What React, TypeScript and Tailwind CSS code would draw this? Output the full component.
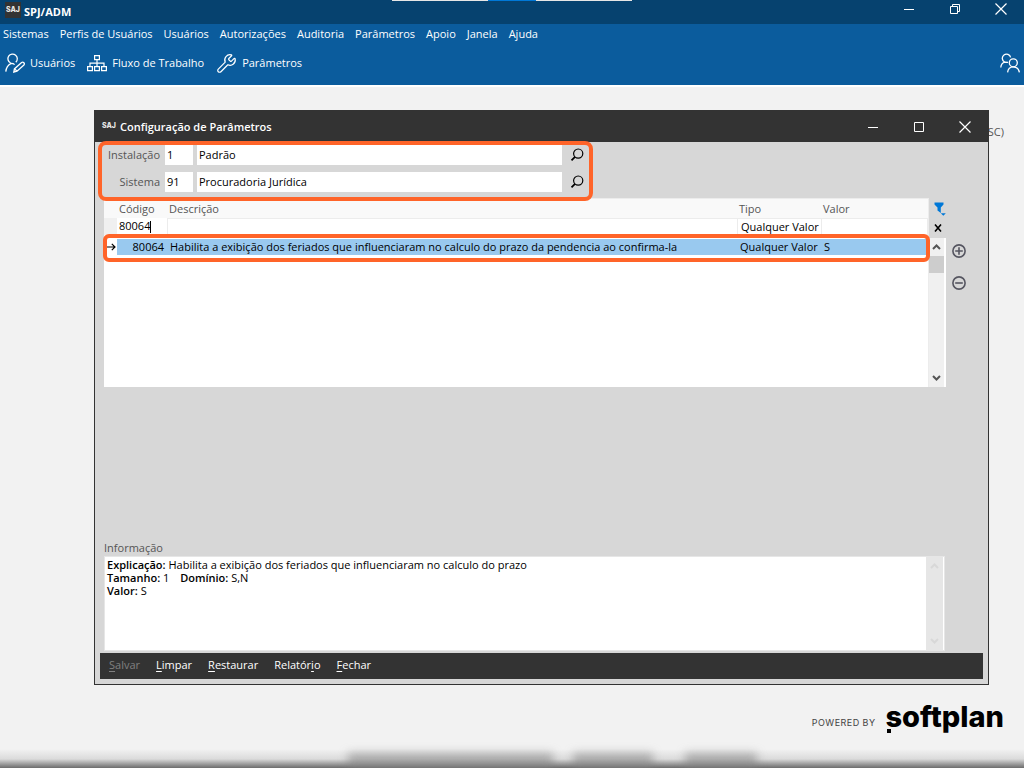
import { Wrench } from "lucide-react";

const MENU = [
  "Sistemas",
  "Perfis de Usuários",
  "Usuários",
  "Autorizações",
  "Auditoria",
  "Parâmetros",
  "Apoio",
  "Janela",
  "Ajuda",
];

const ACTIONS = [
  { before: "", key: "S", after: "alvar", disabled: true },
  { before: "", key: "L", after: "impar", disabled: false },
  { before: "", key: "R", after: "estaurar", disabled: false },
  { before: "Relatór", key: "i", after: "o", disabled: false },
  { before: "", key: "F", after: "echar", disabled: false },
];

const FIELDS = [
  { id: "instalacao", label: "Instalação", code: "1", name: "Padrão" },
  { id: "sistema", label: "Sistema", code: "91", name: "Procuradoria Jurídica" },
];

function UserEditIcon() {
  return (
    <svg width="20" height="20" viewBox="0 0 20 20" fill="none" stroke="currentColor" strokeWidth="1.3">
      <path d="M5.6 10A4.7 4.7 0 1 1 10.8 9.2M0.8 18.6C1.2 14.5 3 12 6.2 10.4C7.6 10.4 8.8 10.8 9.6 11.6" />
      <path d="M8.8 19L9.4 15.9L16.6 9.6C18.2 8.4 20.2 10.4 18.9 12L12 18.2L8.8 19ZM9.6 15.9L12 18.1" />
    </svg>
  );
}

function FlowIcon() {
  return (
    <svg width="20" height="18" viewBox="0 0 20 18" fill="none" stroke="currentColor" strokeWidth="1.2">
      <path d="M7.6 1.6h4.8v4H7.6zM0.6 12.6h4.8v4H0.6zM7.6 12.6h4.8v4H7.6zM14.6 12.6h4.8v4h-4.8z" />
      <path d="M10 5.6v7M3 12.6V9.1h14v3.5" />
    </svg>
  );
}

function UsersIcon() {
  return (
    <svg width="20" height="20" viewBox="0 0 20 20" fill="none" stroke="currentColor" strokeWidth="1.3">
      <path d="M4.5 9A4.2 4.2 0 1 1 10.6 4.4M0.8 14.5C1 11.5 2.3 9.8 5 9.2L8 9.4" />
      <circle cx="13.3" cy="9.8" r="4" />
      <path d="M7.6 19.4C8 15.8 10 13.9 13.3 13.9S18.8 15.8 19.4 19.4" />
    </svg>
  );
}

function SearchIcon() {
  return (
    <svg width="14" height="14" viewBox="0 0 14 14" fill="none" stroke="currentColor">
      <circle cx="8.2" cy="5.6" r="4.6" strokeWidth="1.2" />
      <path d="M5 8.9L1.5 12.4" strokeWidth="1.8" />
    </svg>
  );
}

function FilterIcon() {
  return (
    <svg width="12" height="14" viewBox="0 0 12 14" fill="#0078d7">
      <path d="M0.5 0.5h9v2L6.8 5.5v5.5L3.5 8.5v-3L0.5 2.5zM6.8 11.2h5L9.3 13.7z" />
    </svg>
  );
}

function Chevron({ up = false }: { up?: boolean }) {
  return (
    <svg width="9" height="6" viewBox="0 0 9 6" fill="none" stroke="currentColor" strokeWidth="2">
      <path d={up ? "M1 5L4.5 1.5L8 5" : "M1 1L4.5 4.5L8 1"} />
    </svg>
  );
}

function SajMark({ boxed = false }: { boxed?: boolean }) {
  return (
    <span
      className={`flex h-4 w-4 shrink-0 items-center justify-center bg-[#333333] font-['Inter'] text-[7px] font-extrabold text-neutral-200 ${boxed ? "self-start mt-0.5" : ""}`}
    >
      SAJ
    </span>
  );
}

function WindowButtons({ restore = false }: { restore?: boolean }) {
  return (
    <div className="ml-auto flex h-full text-white">
      <button aria-label="Minimizar" className="flex w-[46px] items-center justify-center">
        <svg width="10" height="10" viewBox="0 0 10 10" stroke="currentColor">
          <path d="M0 5.5h10" />
        </svg>
      </button>
      <button aria-label={restore ? "Restaurar janela" : "Maximizar"} className="flex w-[46px] items-center justify-center">
        <svg width="10" height="10" viewBox="0 0 10 10" fill="none" stroke="currentColor">
          {restore ? <path d="M0.5 2.5h7v7h-7zM2.5 2.5v-2h7v7h-2" /> : <path d="M0.5 0.5h9v9h-9z" />}
        </svg>
      </button>
      <button aria-label="Fechar janela" className="flex w-[46px] items-center justify-center">
        <svg width="12" height="12" viewBox="0 0 12 12" stroke="currentColor" strokeWidth="1.2">
          <path d="M0.5 0.5l11 11M11.5 0.5l-11 11" />
        </svg>
      </button>
    </div>
  );
}

function ParamTable() {
  return (
    <div className="relative min-w-0 flex-1 border-r border-t border-[#ececec] bg-white">
      <table className="w-full table-fixed border-separate border-spacing-0 text-left">
        <colgroup>
          <col className="w-[13px]" />
          <col className="w-[50px]" />
          <col />
          <col className="w-[84px]" />
          <col className="w-[107px]" />
        </colgroup>
        <thead>
          <tr className="h-[19px] bg-[#f9f9f9] text-[#555555]">
            <th aria-label="Linha atual" className="p-0" />
            <th className="p-0 pl-0.5 pt-0.5 font-normal">Código</th>
            <th className="p-0 pl-0.5 pt-0.5 font-normal">Descrição</th>
            <th className="p-0 pl-0.5 pt-0.5 font-normal">Tipo</th>
            <th className="p-0 pl-0.5 pt-0.5 font-normal">Valor</th>
          </tr>
        </thead>
        <tbody>
          <tr className="h-[17px]">
            <td className="bg-[#f0f0f0] p-0" />
            <td className="p-0 pl-0.5">
              <div className="flex">
                <input aria-label="Filtrar código" defaultValue="80064" className="h-4 w-[31px] outline-none" />
                <span className="h-3 w-px self-center bg-black" />
              </div>
            </td>
            <td className="border-l border-t border-[#ececec] p-0">
              <input aria-label="Filtrar descrição" className="block h-4 w-full px-0.5 outline-none" />
            </td>
            <td className="border-l border-t border-[#ececec] p-0">
              <input aria-label="Filtrar tipo" defaultValue="Qualquer Valor" className="block h-4 w-full pl-[3px] outline-none" />
            </td>
            <td className="border-l border-r border-t border-[#ececec] p-0">
              <input aria-label="Filtrar valor" className="block h-4 w-full px-0.5 outline-none" />
            </td>
          </tr>
          <tr className="h-6 whitespace-nowrap leading-4">
            <td className="p-0">
              <svg className="ml-[3px]" width="9" height="8" viewBox="0 0 9 8" fill="none" stroke="#000" strokeWidth="1.2">
                <path d="M0 4h8M4.8 0.8L8 4L4.8 7.2" />
              </svg>
            </td>
            <td className="border-y-4 border-white bg-[#99c9ef] p-0 pr-[3px] text-right">80064</td>
            <td className="border-y-4 border-white bg-[#99c9ef] p-0 pl-[3px]">
              Habilita a exibição dos feriados que influenciaram no calculo do prazo da pendencia ao confirma-la
            </td>
            <td className="border-y-4 border-white bg-[#99c9ef] p-0 pl-[3px]">Qualquer Valor</td>
            <td className="border-y-4 border-white bg-[#99c9ef] p-0 pl-[3px]">S</td>
          </tr>
        </tbody>
      </table>
      <div className="pointer-events-none absolute -left-px -right-0.5 top-[35px] h-7 rounded-md border-4 border-[#ff6429]" />
    </div>
  );
}

function ParamDialog() {
  return (
    <section
      aria-label="Configuração de Parâmetros"
      className="relative ml-[94px] mr-[35px] flex min-h-[575px] flex-col border border-[#333333] bg-[#d7d7d7]"
    >
      <div className="flex h-[31px] items-center bg-[#333333] pl-1.5 text-white">
        <SajMark />
        <h1 className="ml-[3px] pt-0.5 font-semibold">Configuração de Parâmetros</h1>
        <WindowButtons />
      </div>

      <div className="relative z-10 -mt-px ml-[3px] flex h-[60px] w-[495px] flex-col gap-[7px] rounded-lg border-4 border-[#ff6429]">
        {FIELDS.map(({ id, label, code, name }) => (
          <div key={id} className="flex h-5 items-center">
            <label htmlFor={id} className="w-[59px] pr-px text-right text-[#555555]">
              {label}
            </label>
            <input id={id} defaultValue={code} className="ml-1 h-5 w-7 bg-white px-0.5 pb-0.5 outline-none" />
            <input
              aria-label={`Nome: ${label}`}
              defaultValue={name}
              className="ml-1 h-5 min-w-0 flex-1 bg-white px-0.5 pb-0.5 outline-none"
            />
            <button aria-label={`Pesquisar ${label}`} className="flex w-[27px] items-center justify-end pr-[5px]">
              <SearchIcon />
            </button>
          </div>
        ))}
      </div>

      <div className="-mt-[3px] flex h-[189px] pl-[9px]">
        <ParamTable />
        <div className="flex w-[17px] flex-col">
          <div className="flex h-10 flex-col items-center gap-2 pt-1">
            <button aria-label="Filtrar" className="ml-1">
              <FilterIcon />
            </button>
            <button aria-label="Limpar filtro">
              <svg width="8" height="8" viewBox="0 0 8 8" stroke="#000" strokeWidth="1.6">
                <path d="M1 0.5l6 7M7 0.5l-6 7" />
              </svg>
            </button>
          </div>
          <div className="flex flex-1 flex-col items-center border-r-2 border-white bg-[#f0f0f0] text-[#555555]">
            <button aria-label="Rolar para cima" className="flex h-[18px] items-center">
              <Chevron up />
            </button>
            <div className="h-[17px] w-[15px] bg-[#cdcdcd]" />
            <button aria-label="Rolar para baixo" className="mt-auto flex h-[18px] items-center">
              <Chevron />
            </button>
          </div>
        </div>
        <div className="flex w-[42px] flex-col gap-[18px] pl-1.5 pt-[46px] text-[#555560]">
          <button aria-label="Adicionar" className="h-3.5 w-3.5">
            <svg width="14" height="14" viewBox="0 0 14 14" fill="none" stroke="currentColor" strokeWidth="1.6">
              <circle cx="7" cy="7" r="6.1" />
              <path d="M3.2 7h7.6M7 3.2v7.6" />
            </svg>
          </button>
          <button aria-label="Remover" className="h-3.5 w-3.5">
            <svg width="14" height="14" viewBox="0 0 14 14" fill="none" stroke="currentColor" strokeWidth="1.6">
              <circle cx="7" cy="7" r="6.1" />
              <path d="M3.2 7h7.6" />
            </svg>
          </button>
        </div>
      </div>

      <h2 className="mt-auto pl-[9px] leading-4 text-[#555555]">Informação</h2>
      <div className="ml-[9px] mr-[43px] flex min-h-[95px] border border-[#e6e6e6] bg-white">
        <div className="flex-1 pl-0.5 pt-px leading-[13px]">
          <p>
            <b className="font-semibold">Explicação:</b> Habilita a exibição dos feriados que influenciaram no calculo do
            prazo
          </p>
          <p>
            <b className="font-semibold">Tamanho:</b> 1 <b className="ml-2 font-semibold">Domínio:</b> S,N
          </p>
          <p>
            <b className="font-semibold">Valor:</b> S
          </p>
        </div>
        <div className="mr-px flex w-[17px] flex-col items-center justify-between bg-[#e6e6e6] py-1.5 text-[#d8d8d8]">
          <Chevron up />
          <Chevron />
        </div>
      </div>

      <div className="mx-[5px] mb-[5px] mt-0.5 flex h-[26px] items-center gap-4 bg-[#333333] pb-0.5 pl-[9px] text-white">
        {ACTIONS.map(({ before, key, after, disabled }) => (
          <button key={key} disabled={disabled} className="disabled:text-[#808080]">
            {before}
            <span className="underline underline-offset-2">{key}</span>
            {after}
          </button>
        ))}
      </div>
    </section>
  );
}

export default function App() {
  return (
    <div className="flex min-h-screen flex-col bg-[#f2f2f2] font-['Open_Sans',sans-serif] text-[11px] text-black">
      <header className="relative border-b-2 border-white bg-[#0b5c9d] pb-[3px] text-white">
        <div className="flex h-6 items-center bg-[#06426f] pl-[5px]">
          <SajMark boxed />
          <span className="ml-[3px] font-bold">SPJ/ADM</span>
          <div className="-mt-1.5 ml-auto h-6">
            <WindowButtons restore />
          </div>
        </div>
        <div className="absolute left-1/2 top-0 flex h-px w-60 -translate-x-1/2">
          <div className="flex-1 bg-[#e6e6e6]" />
          <div className="w-12 bg-[#0078d7]" />
          <div className="flex-1 bg-[#e6e6e6]" />
        </div>
        <nav className="flex h-5 items-center gap-[11px] pl-[3px]">
          {MENU.map((item) => (
            <button key={item}>{item}</button>
          ))}
        </nav>
        <div className="flex h-[38px] items-center gap-3 pl-[5px] pr-1">
          <button className="flex items-center gap-[5px]">
            <UserEditIcon />
            Usuários
          </button>
          <button className="flex items-center gap-[5px]">
            <FlowIcon />
            Fluxo de Trabalho
          </button>
          <button className="flex items-center gap-[5px]">
            <Wrench size={21} strokeWidth={1.4} />
            Parâmetros
          </button>
          <button aria-label="Trocar usuário" className="ml-auto">
            <UsersIcon />
          </button>
        </div>
      </header>

      <main className="relative flex flex-1 flex-col overflow-hidden pt-[23px]">
        <span className="absolute right-5 top-9 leading-[18px] text-[#555555]">SC)</span>
        <ParamDialog />
        <div className="flex items-end justify-end gap-2.5 pb-9 pr-5 pt-4">
          <span className="pb-1 font-['Inter'] text-[9px] leading-3 tracking-wider text-[#444444]">POWERED BY</span>
          <span className="relative font-['Inter'] text-[29px] font-extrabold leading-8">
            softplan
            <span className="absolute bottom-0 left-0.5 h-1 w-1 bg-black" />
          </span>
        </div>
        <div className="pointer-events-none absolute inset-x-0 bottom-0 h-5 bg-linear-to-b from-transparent via-[#c4c4c4]/50 to-[#606060]">
          <div className="flex justify-center gap-5 pt-1 blur-[5px]">
            <span className="ml-20 h-4 w-[205px] bg-[#808080]/55" />
            <span className="h-4 w-20 bg-[#808080]/55" />
            <span className="ml-3 h-4 w-[72px] bg-[#808080]/55" />
          </div>
        </div>
      </main>
    </div>
  );
}
